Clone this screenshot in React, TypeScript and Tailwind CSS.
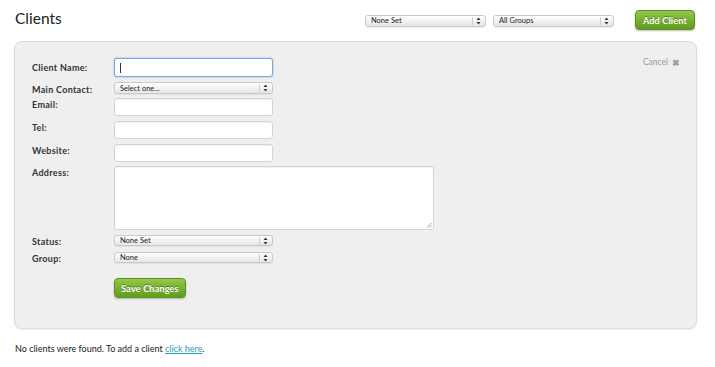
import React from "react";

function Arrows() {
  return (
    <svg width="5" height="8" viewBox="0 0 5 8" className="shrink-0">
      <path d="M2.5 0.5 L4.5 3 L0.5 3 Z" fill="#333" />
      <path d="M2.5 7.5 L4.5 5 L0.5 5 Z" fill="#333" />
    </svg>
  );
}

function FakeSelect({ text, w, h = 12 }: { text: string; w: string; h?: number }) {
  return (
    <div
      className={`${w} flex items-center justify-between rounded-[3px] border border-[#c9c9c9] bg-gradient-to-b from-white to-[#e6e6e6] pl-[5px] pr-[4px] text-[7.5px] leading-none text-[#222] shadow-[0_1px_0_rgba(0,0,0,0.05)]`}
      style={{ height: h }}
    >
      <span className="pt-[1px]">{text}</span>
      <span className="flex items-center gap-[3px]">
        <span className="h-[8px] w-px bg-[#cfcfcf]" />
        <Arrows />
      </span>
    </div>
  );
}

function GreenButton({ children, w, h }: { children: React.ReactNode; w: string; h: string }) {
  return (
    <div
      className={`${w} ${h} flex items-center justify-center rounded-[4px] border border-[#5d8f1f] bg-gradient-to-b from-[#93c94a] to-[#5f9b1c] text-[9px] font-bold leading-none tracking-[0.2px] text-white shadow-[0_1px_2px_rgba(0,0,0,0.25)] [text-shadow:0_-1px_0_rgba(0,0,0,0.35)]`}
    >
      {children}
    </div>
  );
}

function Label({ children, pt = "pt-[0px]" }: { children: React.ReactNode; pt?: string }) {
  return (
    <div className={`w-[82px] shrink-0 text-[9px] font-bold leading-[12px] tracking-[0.3px] text-[#333] ${pt}`}>{children}</div>
  );
}

const inputCls =
  "h-[18px] w-[159px] rounded-[3px] border border-[#d4d4d4] bg-white shadow-[inset_0_1px_1px_rgba(0,0,0,0.06)]";

export default function App() {
  return (
    <div
      className="h-[367px] w-[715px] overflow-hidden bg-white text-[#222]"
      style={{ fontFamily: "Lato, 'Open Sans', sans-serif" }}
    >
      <div className="flex h-[41px] items-center pl-[15px] pr-[20px]">
        <h1 className="-mt-[4px] text-[15.5px] font-normal leading-none text-[#222]">Clients</h1>
        <div className="ml-auto flex items-center">
          <div className="mt-[0px] flex items-center gap-[7px]">
            <FakeSelect text="None Set" w="w-[121px]" h={12} />
            <FakeSelect text="All Groups" w="w-[121px]" h={12} />
          </div>
          <div className="-mt-[1px] ml-[21px]">
            <GreenButton w="w-[60px]" h="h-[20px]">Add Client</GreenButton>
          </div>
        </div>
      </div>

      <div className="ml-[14px] mr-[18px] h-[288px] rounded-[8px] border border-[#dcdcdc] bg-[#efefef] pl-[17px] pt-[16px] shadow-[0_1px_2px_rgba(0,0,0,0.08)]">
        <div className="flex">
          <div className="flex flex-1 flex-col">
            <div className="flex h-[19px] items-center">
              <Label>Client Name:</Label>
              <div className="flex h-[19px] w-[159px] items-center rounded-[3px] border border-[#7aa7d8] bg-white pl-[5px] shadow-[0_0_2px_rgba(90,150,220,0.7)]">
                <span className="h-[10px] w-px bg-[#333]" />
              </div>
            </div>
            <div className="mt-[5px] flex h-[12px] items-start">
              <Label pt="pt-[2px]">Main Contact:</Label>
              <FakeSelect text="Select one..." w="w-[159px]" h={12} />
            </div>
            <div className="mt-[4px] flex items-start">
              <Label pt="pt-[1px]">Email:</Label>
              <div className={inputCls} />
            </div>
            <div className="mt-[5px] flex items-start">
              <Label pt="pt-[1px]">Tel:</Label>
              <div className={inputCls} />
            </div>
            <div className="mt-[5px] flex items-start">
              <Label pt="pt-[1px]">Website:</Label>
              <div className={inputCls} />
            </div>
            <div className="mt-[4px] flex items-start">
              <Label pt="pt-[1px]">Address:</Label>
              <div className="relative h-[64px] w-[320px] rounded-[3px] border border-[#d4d4d4] bg-white shadow-[inset_0_1px_1px_rgba(0,0,0,0.06)]">
                <svg width="6" height="6" viewBox="0 0 6 6" className="absolute bottom-[1px] right-[1px]">
                  <path d="M5.5 1 L1 5.5 M5.5 3.5 L3.5 5.5" stroke="#888" strokeWidth="0.8" />
                </svg>
              </div>
            </div>
            <div className="mt-[5px] flex h-[11px] items-start">
              <Label pt="pt-[1px]">Status:</Label>
              <FakeSelect text="None Set" w="w-[159px]" h={11} />
            </div>
            <div className="mt-[6px] flex h-[11px] items-start">
              <Label pt="pt-[1px]">Group:</Label>
              <FakeSelect text="None" w="w-[159px]" h={11} />
            </div>
            <div className="mt-[15px] flex">
              <div className="w-[82px]" />
              <GreenButton w="w-[72px]" h="h-[20px]">Save Changes</GreenButton>
            </div>
          </div>
          <div className="mr-[16px] -mt-[1px] flex h-[10px] items-center gap-[4px] text-[8.5px] leading-none text-[#999]">
            <span>Cancel</span>
            <span className="text-[9px] font-bold leading-none text-[#999]">✖</span>
          </div>
        </div>
      </div>

      <div className="mt-[14px] pl-[15px] text-[9px] leading-[12px] text-[#222]">
        No clients were found. To add a client{" "}
        <a className="text-[#1ea0bd] underline" href="#">click here</a>.
      </div>
    </div>
  );
}
